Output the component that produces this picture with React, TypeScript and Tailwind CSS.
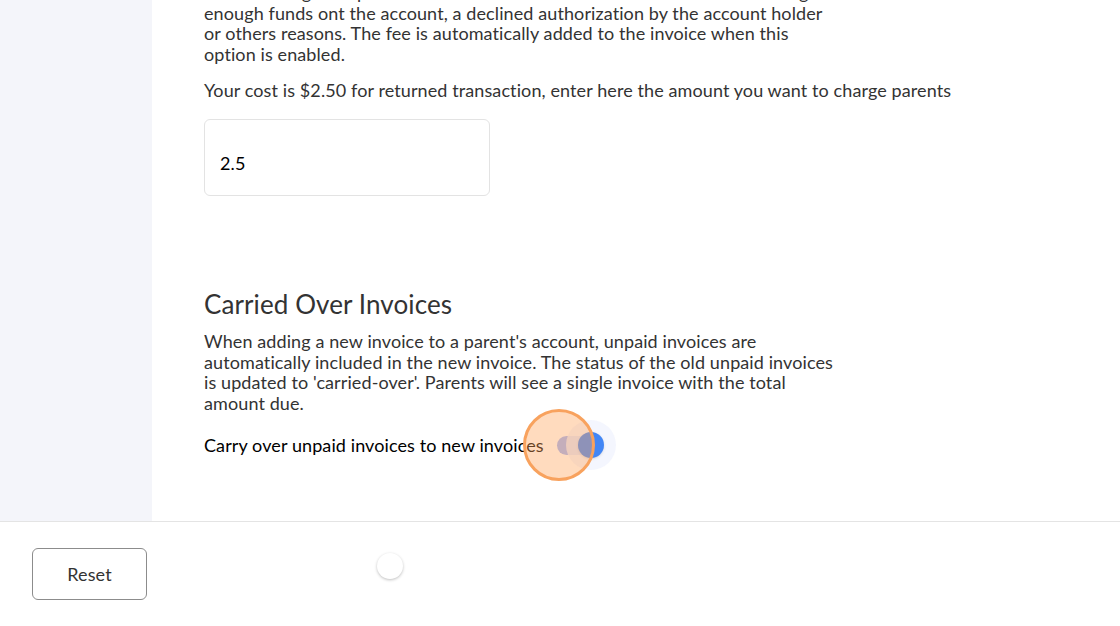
import React from 'react'

function CarryToggle() {
  return (
    <div className="relative ml-[13px] h-[20px] w-[46px]">
      <div className="absolute left-0 top-[1px] h-[19px] w-[44px] rounded-full bg-[#9db4fb]"></div>
      <div className="absolute left-[9px] top-[-15px] h-[50px] w-[50px] rounded-full bg-[#f1f4fe] opacity-80"></div>
      <div className="absolute left-[21px] top-[-3px] h-[26px] w-[26px] rounded-full bg-[#4286f5] shadow"></div>
    </div>
  )
}

export default function App() {
  return (
    <div
      className="relative flex h-[626px] w-[1120px] flex-col overflow-hidden bg-white tracking-[0.1px]"
      style={{ fontFamily: 'Lato, "Open Sans", sans-serif' }}
    >
      <div className="flex h-[521px] shrink-0">
        <aside className="w-[152px] shrink-0 bg-[#f4f5fa]"></aside>

        <main className="relative flex-1 overflow-hidden pl-[52px]">
          <p className="-mt-[18px] text-[18px] leading-[20.6px] text-[#333]">
            A fee is charged to parents when a transaction is returned due to not having
            <br />
            enough funds ont the account, a declined authorization by the account holder
            <br />
            or others reasons. The fee is automatically added to the invoice when this
            <br />
            option is enabled.
          </p>

          <p className="mt-[16px] text-[18px] leading-[20.6px] text-[#333]">
            Your cost is $2.50 for returned transaction, enter here the amount you want to charge parents
          </p>

          <div className="mt-[18px] flex h-[77px] w-[286px] items-center rounded-md border border-[#e3e3e3] px-[15px] pt-[12px]">
            <span className="text-[18px] text-black">2.5</span>
          </div>

          <h3 className="mt-[92px] text-[26px] leading-[32px] text-[#333]">
            Carried Over Invoices
          </h3>

          <p className="mt-[11px] text-[18px] leading-[20.6px] text-[#333]">
            When adding a new invoice to a parent's account, unpaid invoices are
            <br />
            automatically included in the new invoice. The status of the old unpaid invoices
            <br />
            is updated to 'carried-over'. Parents will see a single invoice with the total
            <br />
            amount due.
          </p>

          <div className="mt-[21px] flex items-center">
            <span className="text-[18px] leading-[22px] text-black">
              Carry over unpaid invoices to new invoices
            </span>
            <CarryToggle />
          </div>
        </main>
      </div>

      <footer className="relative flex-1 border-t border-[#e4e4e4] bg-white">
        <button className="ml-[32px] mt-[26px] h-[52px] w-[115px] rounded-md border border-[#8c8c8c] bg-white text-[18px] text-[#333]">
          Reset
        </button>
        <div className="absolute left-[377px] top-[31px] h-[26px] w-[26px] rounded-full bg-white shadow-[0_1px_3px_rgba(0,0,0,0.25)]"></div>
      </footer>

      <div className="pointer-events-none absolute left-[523px] top-[409px] h-[72px] w-[72px] rounded-full border-[3px] border-[#f8a25e] bg-[#ffa45c]/40"></div>
    </div>
  )
}
